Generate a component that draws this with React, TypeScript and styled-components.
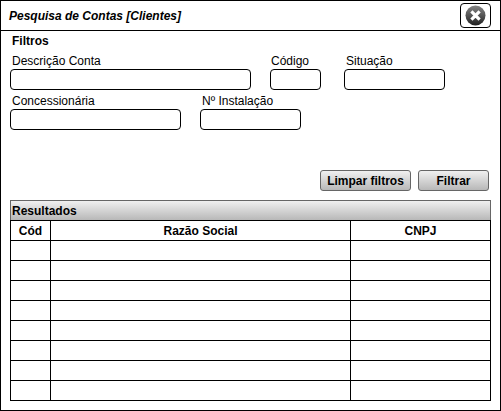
import React from 'react';
import styled, { createGlobalStyle } from 'styled-components';

const GlobalStyle = createGlobalStyle`
  *, *::before, *::after { box-sizing: border-box; }
  body {
    margin: 0;
    background: #fff;
    color: #000;
    font: 12px/14px "Liberation Sans", Arial, sans-serif;
  }
`;

const Dialog = styled.section`
  width: 501px;
  height: 411px;
  border: 1px solid #000;
  display: flex;
  flex-direction: column;
`;

const TitleBar = styled.header`
  flex: none;
  height: 30px;
  border-bottom: 1px solid #000;
  padding: 0 9px 0 8px;
  display: flex;
  align-items: center;
  justify-content: space-between;
`;

const Title = styled.h1`
  margin: 0;
  font-size: 12px;
  font-style: italic;
  font-weight: bold;
`;

const CloseButton = styled.button`
  width: 31px;
  height: 25px;
  padding: 0;
  border: 1px solid #000;
  border-radius: 4px;
  background: #fff;
  display: flex;
  align-items: center;
  justify-content: center;
`;

const Content = styled.div`
  padding: 3px 9px 0;
`;

const SectionTitle = styled.h2`
  margin: 0;
  padding-left: 2px;
  font-size: 12px;
  line-height: 14px;
`;

const FieldRow = styled.div`
  display: flex;
  height: 40px;
`;

const Filters = styled.form`
  padding-top: 2px;
  height: 122px;
`;

const Field = styled.label<{ $width: number; $gap?: number }>`
  width: ${(p) => p.$width}px;
  margin-left: ${(p) => p.$gap ?? 0}px;
  padding-top: 4px;
  display: flex;
  flex-direction: column;
  white-space: nowrap;
`;

const FieldLabel = styled.span<{ $indent: number }>`
  height: 16px;
  padding-left: ${(p) => p.$indent}px;
`;

const Input = styled.input`
  width: 100%;
  height: 21px;
  flex: none;
  padding: 0 3px;
  border: 1px solid #000;
  border-radius: 4px;
  background: #fff;
  font: inherit;
  outline: none;
`;

const Actions = styled.div`
  display: flex;
  justify-content: flex-end;
  gap: 7px;
  padding-right: 2px;
  height: 30px;
`;

const ActionButton = styled.button<{ $width: number }>`
  width: ${(p) => p.$width}px;
  height: 21px;
  padding: 1px 0 0;
  border: 1px solid #666;
  border-radius: 3px;
  background: linear-gradient(#f0f0f0, #b8b8b8);
  color: #000;
  font: bold 12px/14px "Liberation Sans", Arial, sans-serif;
`;

const ResultsBar = styled.div`
  width: 481px;
  height: 20px;
  padding: 3px 1px 0;
  border: 1px solid #666;
  border-bottom: 0;
  background: linear-gradient(#f0f0f0, #b8b8b8);
  font-weight: bold;
`;

const Table = styled.table`
  width: 481px;
  border-collapse: separate;
  border-spacing: 0;
  table-layout: fixed;
  border-top: 1px solid #000;
  border-left: 1px solid #000;
`;

const cell = `
  height: 20px;
  padding: 0;
  border-right: 1px solid #000;
  border-bottom: 1px solid #000;
`;

const HeadCell = styled.th<{ $width: number }>`
  ${cell}
  width: ${(p) => p.$width}px;
`;

const Cell = styled.td`
  ${cell}
`;

const rows = Array.from({ length: 8 }, (_, i) => i);

function CloseIcon() {
  return (
    <svg width="21" height="21" viewBox="0 0 21 21" aria-hidden="true">
      <defs>
        <linearGradient id="disc" x1="0" y1="0" x2="0" y2="1">
          <stop offset="0" stopColor="#858585" />
          <stop offset="0.5" stopColor="#555" />
          <stop offset="1" stopColor="#202020" />
        </linearGradient>
      </defs>
      <circle cx="10.5" cy="10.5" r="10" fill="url(#disc)" />
      <path d="M6.4 6.4l8.2 8.2M14.6 6.4l-8.2 8.2" stroke="#fff" strokeWidth="3.2" />
    </svg>
  );
}

export default function App() {
  return (
    <>
      <GlobalStyle />
      <Dialog>
        <TitleBar>
          <Title>Pesquisa de Contas [Clientes]</Title>
          <CloseButton type="button" aria-label="Fechar">
            <CloseIcon />
          </CloseButton>
        </TitleBar>
        <Content>
          <SectionTitle>Filtros</SectionTitle>
          <Filters>
            <FieldRow>
              <Field $width={241}>
                <FieldLabel $indent={2}>Descrição Conta</FieldLabel>
                <Input />
              </Field>
              <Field $width={51} $gap={19}>
                <FieldLabel $indent={1}>Código</FieldLabel>
                <Input />
              </Field>
              <Field $width={101} $gap={23}>
                <FieldLabel $indent={2}>Situação</FieldLabel>
                <Input />
              </Field>
            </FieldRow>
            <FieldRow>
              <Field $width={171}>
                <FieldLabel $indent={2}>Concessionária</FieldLabel>
                <Input />
              </Field>
              <Field $width={101} $gap={19}>
                <FieldLabel $indent={2}>Nº Instalação</FieldLabel>
                <Input />
              </Field>
            </FieldRow>
          </Filters>
          <Actions>
            <ActionButton type="button" $width={91}>Limpar filtros</ActionButton>
            <ActionButton type="button" $width={71}>Filtrar</ActionButton>
          </Actions>
          <ResultsBar>Resultados</ResultsBar>
          <Table>
            <thead>
              <tr>
                <HeadCell $width={40}>Cód</HeadCell>
                <HeadCell $width={300}>Razão Social</HeadCell>
                <HeadCell $width={140}>CNPJ</HeadCell>
              </tr>
            </thead>
            <tbody>
              {rows.map((row) => (
                <tr key={row}>
                  <Cell />
                  <Cell />
                  <Cell />
                </tr>
              ))}
            </tbody>
          </Table>
        </Content>
      </Dialog>
    </>
  );
}
